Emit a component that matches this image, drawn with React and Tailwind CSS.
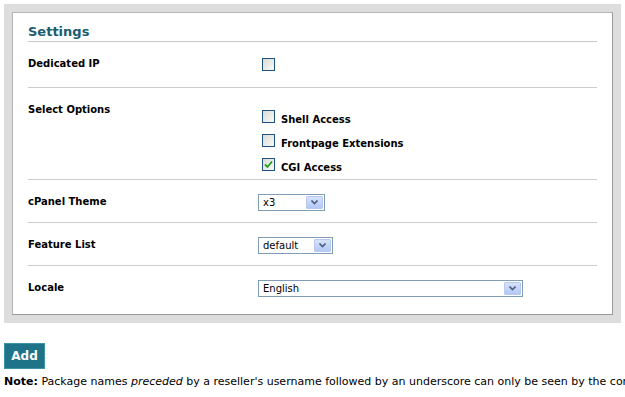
const font = { fontFamily: '"DejaVu Sans", Verdana, sans-serif' };

function Check({ checked }) {
  return (
    <span className="relative block h-[13px] w-[13px] shrink-0 border border-[#1c5180] bg-gradient-to-br from-[#dcdcd6] to-[#f8f8f6]">
      {checked && (
        <svg className="absolute left-[1px] top-[1px]" width="9" height="9" viewBox="0 0 9 9">
          <path d="M1 4.5 L3.5 7 L8 1.5" fill="none" stroke="#21a121" strokeWidth="1.8" />
        </svg>
      )}
    </span>
  );
}

function Select({ value, width }) {
  return (
    <div
      className="flex h-[17px] items-center justify-between border border-[#7f9db9] bg-white pl-[4px] pr-[1px] text-[10px] text-black"
      style={{ width }}
    >
      <span>{value}</span>
      <span className="flex h-[13px] w-[17px] items-center justify-center rounded-[1px] border border-[#b9c9ef] bg-gradient-to-b from-[#d6e2fb] to-[#b4c8f5]">
        <svg width="7" height="5" viewBox="0 0 7 5">
          <path d="M0.5 0.5 L3.5 3.5 L6.5 0.5" fill="none" stroke="#4d6185" strokeWidth="1.6" />
        </svg>
      </span>
    </div>
  );
}

function Row({ label, children, className, last }) {
  return (
    <div className={`flex ${last ? '' : 'border-b border-[#cccccc]'} ${className}`}>
      <div className="w-[230px] text-[10px] font-bold leading-[15px] text-black">{label}</div>
      <div className="flex-1">{children}</div>
    </div>
  );
}

export default function App() {
  return (
    <div className="h-[397px] w-[625px] overflow-hidden bg-white" style={font}>
      <div className="mx-[4px] mt-[4px] bg-[#dddddd] p-[8px]">
        <div className="border border-t-[#b4b4b4] border-l-[#b4b4b4] border-r-[#9a9a9a] border-b-[#9a9a9a] bg-white px-[15px] pb-[8px] pt-[11px]">
          <div className="border-b border-[#c8c8c8] pb-[1px] text-[13px] font-bold leading-[16px] text-[#1a5c70]">
            Settings
          </div>
          <Row label="Dedicated IP" className="h-[46px] pt-[14px]">
            <div className="flex pl-[4px] pt-[2px]">
              <Check />
            </div>
          </Row>
          <Row label="Select Options" className="h-[92px] pt-[14px]">
            <div className="flex flex-col gap-[11px] pl-[4px] pt-[8px]">
              {[
                ['Shell Access', false],
                ['Frontpage Extensions', false],
                ['CGI Access', true],
              ].map(([t, c]) => (
                <div key={t} className="flex items-end gap-[6px] text-[10px] font-bold leading-[12px]">
                  <Check checked={c} />
                  <span className="relative top-[3px]">{t}</span>
                </div>
              ))}
            </div>
          </Row>
          <Row label="cPanel Theme" className="h-[43px] pt-[14px]">
            <Select value="x3" width={67} />
          </Row>
          <Row label="Feature List" className="h-[43px] pt-[14px]">
            <Select value="default" width={75} />
          </Row>
          <Row label="Locale" className="h-[40px] pt-[14px]" last>
            <Select value="English" width={265} />
          </Row>
        </div>
      </div>
      <div className="px-[4px] pt-[20px]">
        <button className="h-[26px] w-[41px] border border-[#3a93a8] bg-[#1e7388] text-[12px] font-bold text-white">
          Add
        </button>
        <p className="mt-[5px] whitespace-nowrap text-[11px] text-black">
          <b>Note:</b> Package names <i>preceded</i> by a reseller's username followed by an underscore can
          only be seen by the corresponding reseller.
        </p>
      </div>
    </div>
  );
}
